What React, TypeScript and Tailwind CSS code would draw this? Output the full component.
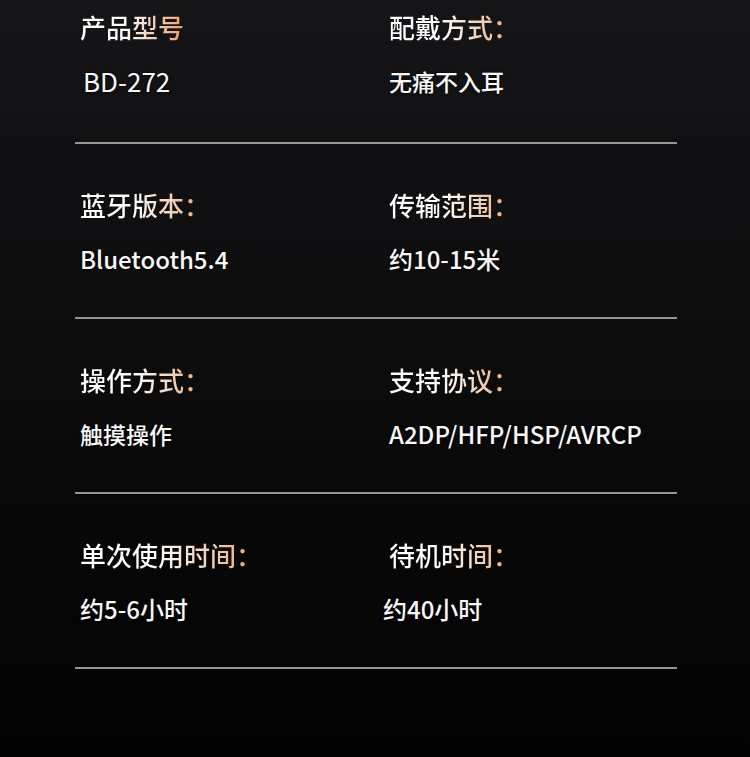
import React from 'react';

type Spec = {
  label: string;
  value: string;
  valueClass?: string;
};

const rows: [Spec, Spec][] = [
  [
    { label: '产品型号', value: 'BD-272', valueClass: 'text-[26px] pl-[3px] font-normal' },
    { label: '配戴方式：', value: '无痛不入耳', valueClass: 'text-[23px]' },
  ],
  [
    { label: '蓝牙版本：', value: 'Bluetooth5.4' },
    { label: '传输范围：', value: '约10-15米' },
  ],
  [
    { label: '操作方式：', value: '触摸操作', valueClass: 'text-[23px]' },
    { label: '支持协议：', value: 'A2DP/HFP/HSP/AVRCP' },
  ],
  [
    { label: '单次使用时间：', value: '约5-6小时' },
    { label: '待机时间：', value: '约40小时', valueClass: 'text-[24px] -ml-[6px]' },
  ],
];

const Cell: React.FC<{ spec: Spec }> = ({ spec }) => (
  <div className="flex flex-col gap-[24px]">
    <div className="h-[30px] leading-[30px]">
      <span className="inline-block bg-gradient-to-r from-white from-40% via-[#f1d2b8] via-70% to-[#ef9f5f] bg-clip-text text-[26px] font-medium text-transparent">
        {spec.label}
      </span>
    </div>
    <div
      className={`h-[30px] leading-[30px] text-[#f7f7f7] font-medium [text-shadow:0_0_3px_rgba(0,0,0,0.9)] ${
        spec.valueClass ?? 'text-[24px]'
      }`}
    >
      {spec.value}
    </div>
  </div>
);

export default function App() {
  return (
    <div
      className="h-[757px] w-[750px] overflow-hidden bg-gradient-to-b from-[#151517] via-[#0b0b0c] via-55% to-[#030303]"
      style={{ fontFamily: '"Noto Sans CJK SC", "Noto Sans", sans-serif' }}
    >
      <div className="ml-[75px] w-[602px]">
        {rows.map((pair, i) => (
          <div key={i} className={i === 0 ? 'pt-[12px]' : 'pt-[46px]'}>
            <div className={`grid grid-cols-[314px_1fr] ${i === 0 ? 'pb-[46px]' : 'pb-[43px]'}`}>
              <div className="pl-[5px]">
                <Cell spec={pair[0]} />
              </div>
              <Cell spec={pair[1]} />
            </div>
            <div className="h-[2px] bg-[#9a958e]" />
          </div>
        ))}
      </div>
    </div>
  );
}
